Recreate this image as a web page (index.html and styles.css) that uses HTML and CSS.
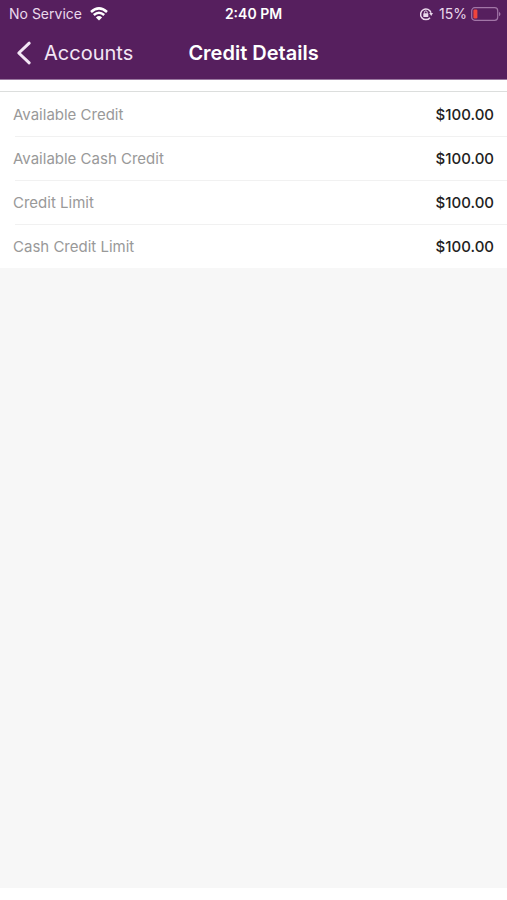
FILE: index.html
```html
<!DOCTYPE html>
<html lang="en">
<head>
<meta charset="utf-8">
<meta name="viewport" content="width=device-width, initial-scale=1">
<title>Credit Details</title>
<link rel="stylesheet" href="styles.css">
</head>
<body>
<header class="top">
  <div class="status">
    <div class="status-left">
      <span>No Service</span>
      <svg class="wifi" width="18" height="14" viewBox="0 0 18 14" aria-hidden="true">
        <path d="M1 5Q9-2.2 17 5M3.8 8Q9 3.4 14.2 8" fill="none" stroke="currentColor" stroke-width="2.5"/>
        <path d="M5.9 10.4Q9 7.8 12.1 10.4L9 13.6Z" fill="currentColor"/>
      </svg>
    </div>
    <span class="time">2:40 PM</span>
    <div class="status-right">
      <svg class="lock" width="14" height="14" viewBox="0 0 14 14" aria-hidden="true">
        <path d="M11 10.7A5.3 5.3 0 1 1 12 5.8" fill="none" stroke="currentColor" stroke-width="1.5"/>
        <path d="M10.2 6H14L12.2 8.9Z" fill="currentColor"/>
        <rect x="4.3" y="6.2" width="5" height="3.8" rx=".5" fill="currentColor"/>
        <path d="M5.4 6.5V5.3a1.4 1.4 0 0 1 2.8 0V6.5" fill="none" stroke="currentColor"/>
      </svg>
      <span>15%</span>
      <svg class="battery" width="30" height="14" viewBox="0 0 30 14" aria-hidden="true">
        <rect x=".7" y=".7" width="26" height="12.6" rx="3" fill="none" stroke="#a276a7" stroke-width="1.2"/>
        <path d="M28 4.7Q31 7 28 9.3Z" fill="#a276a7"/>
        <rect x="2.4" y="2.5" width="4" height="9" rx="1.2" fill="#f0443d"/>
      </svg>
    </div>
  </div>
  <nav class="bar">
    <a class="back" href="#">
      <svg width="16" height="24" viewBox="0 0 16 24" aria-hidden="true">
        <path d="M13.2 2.2L2.8 12L13.2 21.8" fill="none" stroke="currentColor" stroke-width="3" stroke-linecap="round" stroke-linejoin="round"/>
      </svg>
      <span>Accounts</span>
    </a>
    <h1 class="title">Credit Details</h1>
  </nav>
</header>
<main class="content">
  <dl class="list">
    <div class="row"><dt>Available Credit</dt><dd>$100.00</dd></div>
    <div class="row"><dt>Available Cash Credit</dt><dd>$100.00</dd></div>
    <div class="row"><dt>Credit Limit</dt><dd>$100.00</dd></div>
    <div class="row"><dt>Cash Credit Limit</dt><dd>$100.00</dd></div>
  </dl>
</main>
</body>
</html>
```
FILE: styles.css
```css
* {
  box-sizing: border-box;
}

body {
  margin: 0;
  min-height: 100vh;
  padding-bottom: 12px;
  display: flex;
  flex-direction: column;
  background: #fff;
  font-family: Inter, "Liberation Sans", sans-serif;
}

.top {
  background: #561f5e;
  color: #fff;
  border-bottom: 1px solid #9a78a0;
}

.status,
.bar {
  display: grid;
  grid-template-columns: 1fr auto 1fr;
  align-items: center;
}

.status {
  height: 28px;
  padding: 0 6px 1px;
  font-size: 14px;
  color: #ead9ec;
}

.status-left,
.status-right {
  display: flex;
  align-items: center;
}

.status-left {
  gap: 8px;
  padding-left: 3px;
}

.status-right {
  justify-content: flex-end;
  gap: 4px;
}

.wifi {
  color: #fff;
}

.lock {
  margin-right: 2px;
}

.time {
  color: #fff;
  font-weight: 600;
}

.bar {
  height: 51px;
  padding: 0 16px 2px;
}

.back {
  display: flex;
  align-items: center;
  gap: 12px;
  color: #f3e6f5;
  font-size: 20px;
  text-decoration: none;
}

.title {
  margin: 0;
  font-size: 20px;
  font-weight: 600;
}

.content {
  flex: 1;
  background: #f7f7f7;
}

.list {
  margin: 0;
  padding-top: 12px;
  background: linear-gradient(#dcdedd, #dcdedd) 0 11px / 100% 1px no-repeat #fff;
}

.row {
  display: flex;
  justify-content: space-between;
  align-items: center;
  height: 44px;
  padding: 1px 13px 0;
  font-size: 15px;
}

.row + .row {
  background: linear-gradient(#f1f1f1, #f1f1f1) 15px 0 / 100% 1px no-repeat;
}

dt {
  color: #999;
}

dd {
  margin: 0;
  color: #222;
  font-weight: 500;
}
```
